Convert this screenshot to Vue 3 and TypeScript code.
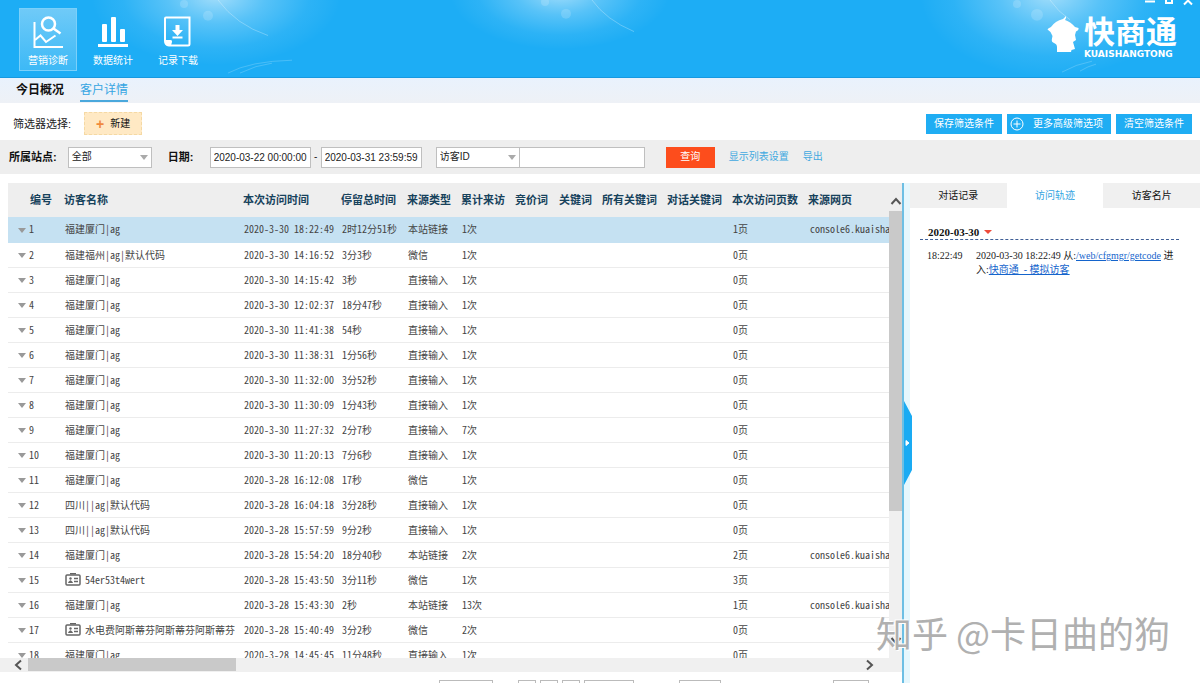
<script setup lang="ts">
import { ref } from 'vue'

interface Visit {
  name: string
  card?: boolean
  time: string
  stay: string
  source: string
  visits: string
  pages: string
  page?: string
}

const columns: { label: string; cls: string }[] = [
  { label: '编号', cls: 'c-no' },
  { label: '访客名称', cls: 'c-name' },
  { label: '本次访问时间', cls: 'c-time' },
  { label: '停留总时间', cls: 'c-stay' },
  { label: '来源类型', cls: 'c-source' },
  { label: '累计来访', cls: 'c-visits' },
  { label: '竞价词', cls: 'c-bid' },
  { label: '关键词', cls: 'c-key' },
  { label: '所有关键词', cls: 'c-all' },
  { label: '对话关键词', cls: 'c-all' },
  { label: '本次访问页数', cls: 'c-pages' },
  { label: '来源网页', cls: 'c-page' },
]

const visits: Visit[] = [
  { name: '福建厦门|ag', time: '2020-3-30 18:22:49', stay: '2时12分51秒', source: '本站链接', visits: '1次', pages: '1页', page: 'console6.kuaisha' },
  { name: '福建福州|ag|默认代码', time: '2020-3-30 14:16:52', stay: '3分3秒', source: '微信', visits: '1次', pages: '0页' },
  { name: '福建厦门|ag', time: '2020-3-30 14:15:42', stay: '3秒', source: '直接输入', visits: '1次', pages: '0页' },
  { name: '福建厦门|ag', time: '2020-3-30 12:02:37', stay: '18分47秒', source: '直接输入', visits: '1次', pages: '0页' },
  { name: '福建厦门|ag', time: '2020-3-30 11:41:38', stay: '54秒', source: '直接输入', visits: '1次', pages: '0页' },
  { name: '福建厦门|ag', time: '2020-3-30 11:38:31', stay: '1分56秒', source: '直接输入', visits: '1次', pages: '0页' },
  { name: '福建厦门|ag', time: '2020-3-30 11:32:00', stay: '3分52秒', source: '直接输入', visits: '1次', pages: '0页' },
  { name: '福建厦门|ag', time: '2020-3-30 11:30:09', stay: '1分43秒', source: '直接输入', visits: '1次', pages: '0页' },
  { name: '福建厦门|ag', time: '2020-3-30 11:27:32', stay: '2分7秒', source: '直接输入', visits: '7次', pages: '0页' },
  { name: '福建厦门|ag', time: '2020-3-30 11:20:13', stay: '7分6秒', source: '直接输入', visits: '1次', pages: '0页' },
  { name: '福建厦门|ag', time: '2020-3-28 16:12:08', stay: '17秒', source: '微信', visits: '1次', pages: '0页' },
  { name: '四川||ag|默认代码', time: '2020-3-28 16:04:18', stay: '3分28秒', source: '直接输入', visits: '1次', pages: '0页' },
  { name: '四川||ag|默认代码', time: '2020-3-28 15:57:59', stay: '9分2秒', source: '直接输入', visits: '1次', pages: '0页' },
  { name: '福建厦门|ag', time: '2020-3-28 15:54:20', stay: '18分40秒', source: '本站链接', visits: '2次', pages: '2页', page: 'console6.kuaisha' },
  { name: '54er53t4wert', card: true, time: '2020-3-28 15:43:50', stay: '3分11秒', source: '微信', visits: '1次', pages: '3页' },
  { name: '福建厦门|ag', time: '2020-3-28 15:43:30', stay: '2秒', source: '本站链接', visits: '13次', pages: '1页', page: 'console6.kuaisha' },
  { name: '水电费阿斯蒂芬阿斯蒂芬阿斯蒂芬', card: true, time: '2020-3-28 15:40:49', stay: '3分2秒', source: '微信', visits: '2次', pages: '0页' },
  { name: '福建厦门|ag', time: '2020-3-28 14:45:45', stay: '11分48秒', source: '直接输入', visits: '1次', pages: '0页' },
]

const selected = ref(0)
const detailTabs = ['对话记录', '访问轨迹', '访客名片']
const detailTab = ref(1)
const start = ref('2020-03-22 00:00:00')
const end = ref('2020-03-31 23:59:59')
const keyword = ref('')
</script>

<template>
  <div class="app">
    <header class="top">
      <svg class="flares" viewBox="0 0 1200 78" preserveAspectRatio="none" aria-hidden="true">
        <defs>
          <radialGradient id="glow">
            <stop offset="0" stop-color="#fff" stop-opacity=".6" />
            <stop offset=".4" stop-color="#dff4ff" stop-opacity=".3" />
            <stop offset=".75" stop-color="#dff4ff" stop-opacity=".08" />
            <stop offset="1" stop-color="#fff" stop-opacity="0" />
          </radialGradient>
        </defs>
        <ellipse cx="216" cy="-4" rx="125" ry="70" fill="url(#glow)" />
        <ellipse cx="560" cy="-8" rx="110" ry="58" fill="url(#glow)" />
        <ellipse cx="1050" cy="-6" rx="130" ry="84" fill="url(#glow)" />
        <g fill="#fff" fill-opacity=".16">
          <circle cx="184" cy="4" r="4" /><circle cx="208" cy="16" r="5" />
          <circle cx="545" cy="2" r="4" /><circle cx="566" cy="14" r="5" />
          <circle cx="1017" cy="4" r="4" /><circle cx="1037" cy="15" r="6" />
        </g>
        <g fill="none" stroke="#fff" stroke-opacity=".28">
          <path d="M218 0Q236 25 268 36M592 0Q606 20 634 32M1050 0Q1058 12 1070 20" />
          <path d="M228 74Q250 62 292 61M240 74Q256 66 272 64M1062 73Q1076 65 1092 62M1080 72Q1088 67 1096 65" stroke-opacity=".2" />
        </g>
      </svg>
      <nav class="modules">
        <button class="module current" type="button">
          <svg width="32" height="32" viewBox="0 0 32 32" fill="none" stroke="#fff" stroke-width="2">
            <path d="M2.500 6V31H31" />
            <path d="M3 24L8.500 19.500L14 26L23.500 19.500" />
            <circle cx="16.500" cy="8" r="6.500" stroke-width="2.500" />
            <path d="M21.500 12.500L28.500 17.500" stroke-width="2.500" />
          </svg>
          <span>营销诊断</span>
        </button>
        <button class="module" type="button">
          <svg width="32" height="32" viewBox="0 0 32 32" fill="#fff">
            <rect x="5" y="8" width="5" height="18" rx="1" />
            <rect x="14" y="1" width="5" height="25" rx="1" />
            <rect x="23" y="13" width="5" height="13" rx="1" />
            <rect x="1" y="28" width="30" height="3" />
          </svg>
          <span>数据统计</span>
        </button>
        <button class="module" type="button">
          <svg width="32" height="32" viewBox="0 0 32 32" fill="none" stroke="#fff" stroke-width="2">
            <path d="M3 25V2.500Q3 1.500 4 1.500H27.500V28Q27.500 29.500 26 29.500H7Q3 29 3 25Z" />
            <path d="M3 24H8.500Q10.500 24 10 26L9 29.500H7Q3 29 3 25Z" fill="#fff" stroke="none" />
            <path d="M13.500 9H17.500V14H21L15.500 20L10 14H13.500Z" fill="#fff" stroke="none" />
            <path d="M10.500 21.500H20.500" />
          </svg>
          <span>记录下载</span>
        </button>
      </nav>
      <div class="brand">
        <svg width="32" height="38" viewBox="0 0 32 38" fill="#fff" aria-hidden="true">
          <path d="M19 0Q19.500 2 18 4Q24 6 28 11L31.500 12Q32 14 29 15.500L28 19L29 24L26 26L28 33L24.500 34L24 36H10V31Q10 28 7 27Q4 26 5 22.500L5.500 20L3.500 16L.5 13.500Q1 12 4 11Q8 5 16 3Z" />
        </svg>
        <div class="brand-text">
          <strong>快商通</strong>
          <span>KUAISHANGTONG</span>
        </div>
      </div>
      <div class="window-controls">
        <button type="button" aria-label="最小化"><svg width="10" height="6" viewBox="0 0 10 6"><path d="M0 1.500H10" /></svg></button>
        <button type="button" aria-label="还原"><svg width="10" height="6" viewBox="0 0 10 6"><path d="M2 0V3H8V0" /></svg></button>
        <button type="button" aria-label="关闭"><svg width="10" height="6" viewBox="0 0 10 6"><path d="M1 4.500L5 .5L9 4.500" /></svg></button>
      </div>
    </header>

    <nav class="subnav">
      <a href="#overview">今日概况</a>
      <a href="#customers" class="on">客户详情</a>
    </nav>

    <section class="presets">
      <span>筛选器选择:</span>
      <button class="new" type="button"><i>+</i>新建</button>
      <div class="actions">
        <button type="button">保存筛选条件</button>
        <button type="button" class="more">
          <svg width="14" height="14" viewBox="0 0 14 14" fill="none" stroke="#fff"><circle cx="7" cy="7" r="6" /><path d="M3.500 7H10.500M7 3.500V10.500" /></svg>
          更多高级筛选项
        </button>
        <button type="button">清空筛选条件</button>
      </div>
    </section>

    <form class="filters" @submit.prevent>
      <label class="bold" for="site">所属站点:</label>
      <span class="select site"><select id="site"><option>全部</option></select></span>
      <label class="bold date-label" for="from">日期:</label>
      <input id="from" v-model="start" class="date" type="text">
      <span class="dash">-</span>
      <input v-model="end" class="date" type="text" aria-label="结束日期">
      <span class="select field"><select aria-label="查询字段"><option>访客ID</option></select></span>
      <input v-model="keyword" class="keyword" type="text" aria-label="查询内容">
      <button class="query" type="submit">查询</button>
      <a href="#columns">显示列表设置</a>
      <a href="#export">导出</a>
    </form>

    <main class="body">
      <section class="list">
        <div class="grid-area">
          <div class="table-clip">
            <table>
              <thead>
                <tr><th v-for="c in columns" :key="c.label" :class="c.cls">{{ c.label }}</th></tr>
              </thead>
              <tbody>
                <tr v-for="(v, i) in visits" :key="i" :class="{ picked: i === selected }" @click="selected = i">
                  <td class="no"><span class="caret"></span>{{ i + 1 }}</td>
                  <td>
                    <span class="name">
                      <svg v-if="v.card" width="16" height="13" viewBox="0 0 16 13" fill="none" stroke="#666">
                        <rect x="1" y="2" width="14" height="10" rx="1" stroke-width="1.500" />
                        <path d="M5 .7H11" stroke-width="1.400" />
                        <circle cx="5.500" cy="5.500" r="1.200" fill="#666" stroke="none" />
                        <path d="M3.500 9.500Q5.500 6 7.500 9.500Z" fill="#666" />
                        <path d="M9 5.500H13M9 8.500H13" stroke-width="1.300" />
                      </svg>
                      {{ v.name }}
                    </span>
                  </td>
                  <td>{{ v.time }}</td>
                  <td>{{ v.stay }}</td>
                  <td>{{ v.source }}</td>
                  <td>{{ v.visits }}</td>
                  <td></td>
                  <td></td>
                  <td></td>
                  <td></td>
                  <td>{{ v.pages }}</td>
                  <td class="url">{{ v.page }}</td>
                </tr>
              </tbody>
            </table>
          </div>
          <div class="vbar">
            <button type="button" class="up" aria-label="向上滚动"><svg width="12" height="8" viewBox="0 0 12 8"><path d="M1.500 7L6 2L10.500 7" /></svg></button>
            <div class="vtrack"><div class="vthumb"></div></div>
            <button type="button" class="down" aria-label="向下滚动"><svg width="12" height="8" viewBox="0 0 12 8"><path d="M1.500 1L6 6L10.500 1" /></svg></button>
          </div>
        </div>
        <div class="hbar">
          <button type="button" aria-label="向左滚动"><svg width="8" height="12" viewBox="0 0 8 12"><path d="M7 1.500L2 6L7 10.500" /></svg></button>
          <div class="htrack"><div class="hthumb"></div></div>
          <button type="button" aria-label="向右滚动"><svg width="8" height="12" viewBox="0 0 8 12"><path d="M1 1.500L6 6L1 10.500" /></svg></button>
        </div>
        <div class="pager">
          <select aria-label="每页条数" class="size"></select>
          <button type="button" aria-label="首页"></button>
          <button type="button" aria-label="上一页"></button>
          <button type="button" aria-label="下一页"></button>
          <button type="button" aria-label="末页" class="wide"></button>
          <input type="text" aria-label="页码" class="jump">
          <button type="button" aria-label="跳转" class="go"></button>
        </div>
      </section>

      <div class="splitter">
        <button type="button" aria-label="收起详情">
          <svg width="8" height="84" viewBox="0 0 8 84"><path d="M0 0L8 15V69L0 84Z" fill="#1aabf3" /><path d="M2 39.500L5 42L2 44.500Z" fill="#fff" stroke="#fff" /></svg>
        </button>
      </div>

      <aside class="detail">
        <div class="tabs">
          <button v-for="(t, i) in detailTabs" :key="t" type="button" :class="{ on: i === detailTab }" @click="detailTab = i">{{ t }}</button>
        </div>
        <div class="track">
          <h3>2020-03-30<span class="red-caret"></span></h3>
          <div class="entry">
            <time>18:22:49</time>
            <p>2020-03-30 18:22:49 从:<a href="#getcode">/web/cfgmgr/getcode</a> 进<br>入:<a href="#visitor">快商通&nbsp; - 模拟访客</a></p>
          </div>
        </div>
      </aside>
    </main>
    <div class="watermark">知乎 @卡日曲的狗</div>
  </div>
</template>

<style>
html, body, #app { height: 100%; }
</style>

<style scoped>
.app {
  position: relative;
  height: 100%;
  display: flex;
  flex-direction: column;
  overflow: hidden;
  background: #fff;
  color: #222;
  font: 10px/14px "Liberation Sans", "Noto Sans CJK SC", sans-serif;
}
* { box-sizing: border-box; }
button, input, select { font: inherit; color: inherit; margin: 0; padding: 0; border-radius: 0; }
button { border: 0; background: none; cursor: pointer; }
a { text-decoration: none; }

.top {
  position: relative;
  flex: none;
  height: 78px;
  padding: 8px 23px 0 19px;
  display: flex;
  justify-content: space-between;
  align-items: flex-start;
  background: #1dadf5;
  border-bottom: 1px solid #1799e0;
  overflow: hidden;
}
.flares { position: absolute; inset: 0; width: 100%; height: 100%; }
.modules { position: relative; display: flex; gap: 7px; }
.module {
  width: 58px;
  height: 63px;
  display: flex;
  flex-direction: column;
  align-items: center;
  gap: 6px;
  padding-top: 7px;
  border: 1px solid transparent;
  color: #fff;
}
.module.current { background: linear-gradient(#6fcaf8, #3db9f6); border-color: #7bd0fa; }
.brand { position: relative; display: flex; gap: 5px; padding-top: 8px; color: #fff; }
.brand-text { display: flex; flex-direction: column; }
.brand-text strong { font-size: 31px; line-height: 33px; font-weight: 700; }
.brand-text span { font: bold 9px/10px "DejaVu Sans", sans-serif; }
.window-controls { position: absolute; top: 0; right: 7px; display: flex; gap: 9px; }
.window-controls button { display: flex; }
.window-controls svg { fill: none; stroke: #fff; stroke-width: 2; }

.subnav {
  flex: none;
  height: 25px;
  padding: 0 16px;
  display: flex;
  gap: 16px;
  background: linear-gradient(#e9f2fd, #eef1f6);
  font-size: 12px;
  font-weight: 700;
}
.subnav a { height: 24px; line-height: 25px; color: #111; }
.subnav a.on { color: #35a5e2; font-weight: 400; border-bottom: 2px solid #4aa8dc; }

.presets { flex: none; height: 37px; padding: 4px 8px 0 13px; display: flex; align-items: center; font-size: 11px; }
.new {
  width: 58px;
  height: 23px;
  margin-left: 13px;
  display: flex;
  align-items: center;
  justify-content: center;
  gap: 6px;
  background: #ffe9c4;
  border: 1px dashed #f5d9a4;
  color: #111;
  font-size: 10px;
}
.new i { color: #f08a3c; font: bold 14px/16px "Liberation Sans", sans-serif; }
.actions { margin-left: auto; display: flex; gap: 5px; font-size: 10px; }
.actions button { height: 20px; padding: 0 8px; background: #1fadf3; color: #fff; }
.actions .more { display: flex; align-items: center; gap: 9px; padding: 0 8px 0 3px; }

.filters {
  flex: none;
  height: 34px;
  padding-left: 9px;
  display: flex;
  align-items: center;
  background: #eee;
}
.bold { font-size: 11px; font-weight: 700; color: #111; }
.filters input { height: 21px; border: 1px solid #bfbfbf; background: #fff; }
.select { position: relative; width: 84px; height: 21px; }
.select select { width: 100%; height: 100%; padding-left: 3px; appearance: none; border: 1px solid #bfbfbf; background: #fff; }
.select::after {
  content: "";
  position: absolute;
  right: 4px;
  top: 8px;
  border: 4px solid transparent;
  border-top: 5px solid #aaa;
  border-bottom: 0;
}
.site { margin-left: 11px; }
.date-label { width: 42px; margin-left: 16px; }
.date { width: 101px; padding-left: 3px; }
.dash { width: 10px; text-align: center; }
.field { margin-left: 14px; }
.keyword { width: 126px; margin-left: -1px; padding: 0 3px; }
.query { width: 49px; height: 21px; margin: 0 14px 0 21px; background: #fd4d1c; color: #fff; }
.filters a { margin-right: 14px; color: #41a9e0; }

.body { flex: 1; min-height: 0; display: flex; padding-top: 9px; }
.list { flex: 1; min-width: 0; display: flex; flex-direction: column; }
.grid-area { flex: 1; min-height: 0; display: flex; padding-left: 8px; }
.table-clip { flex: 1; min-width: 0; overflow: hidden; }
table { width: 100%; table-layout: fixed; border-collapse: collapse; }
th {
  height: 34px;
  padding: 0;
  background: #eee;
  color: #17425c;
  font-size: 11px;
  font-weight: 700;
  text-align: left;
  white-space: nowrap;
}
.c-no { width: 56px; padding-left: 22px; }
.c-name { width: 179px; }
.c-time { width: 98px; }
.c-stay { width: 66px; }
.c-source { width: 54px; }
.c-visits { width: 54px; }
.c-bid { width: 44px; }
.c-key { width: 43px; }
.c-all { width: 65px; }
.c-pages { width: 76px; }
td {
  height: 25px;
  padding: 0 0 0 1px;
  border-bottom: 1px solid #ececec;
  color: #444;
  font-family: "Noto Sans CJK SC", sans-serif;
  font-feature-settings: "hwid";
  white-space: nowrap;
  overflow: hidden;
}
.picked td { background: #c5e1f2; border-color: #c5e1f2; }
td.no { padding-left: 10px; }
td.url { padding-left: 2px; }
.caret {
  display: inline-block;
  margin-right: 3px;
  vertical-align: middle;
  border: 4px solid transparent;
  border-top: 5px solid #999;
  border-bottom: 0;
}
.name { display: flex; align-items: center; gap: 4px; }

.vbar { flex: none; width: 13px; display: flex; flex-direction: column; background: #f0f0f0; }
.vbar button, .hbar button { display: flex; align-items: center; justify-content: center; }
.vbar svg, .hbar svg { fill: none; stroke: #555; stroke-width: 2; }
.up { height: 28px; padding-top: 8px; background: #eee; }
.vtrack { flex: 1; }
.vthumb { height: 71%; background: #c9c9c9; }
.down { height: 24px; padding-bottom: 10px; }
.hbar { flex: none; height: 14px; padding: 0 22px 0 8px; display: flex; background: #f0f0f0; }
.hbar button { width: 20px; }
.htrack { flex: 1; padding-bottom: 1px; }
.hthumb { width: 25%; height: 100%; background: #c9c9c9; }
.pager { flex: none; height: 11px; padding: 8px 33px 0 439px; display: flex; gap: 4px; align-items: flex-start; overflow: hidden; }
.pager button, .pager select, .pager input { flex: none; width: 18px; height: 18px; border: 1px solid #bbb; background: #fff; appearance: none; }
.pager .size { width: 54px; margin-right: 21px; }
.pager .wide { width: 50px; }
.pager .jump { width: 42px; margin-left: 41px; }
.pager .go { width: 36px; margin-left: auto; }

.splitter {
  position: relative;
  flex: none;
  width: 8px;
  border-left: 2px solid #6dbfe4;
  background: #e6f7fd;
}
.splitter button { position: absolute; left: 0; top: 52%; transform: translateY(-50%); display: flex; }

.detail { flex: 0 0 290px; }
.tabs { display: flex; }
.tabs button { flex: 1; height: 25px; background: #f0f0f0; color: #111; }
.tabs button.on { background: #fff; color: #35a5e2; }
.track { padding: 17px 21px 0 10px; font-family: "Liberation Serif", "Noto Sans CJK SC", serif; }
.track h3 {
  margin: 0;
  padding-left: 8px;
  display: flex;
  align-items: center;
  gap: 5px;
  border-bottom: 1px dashed #3f5f96;
  font-size: 11px;
  line-height: 14px;
  color: #111;
}
.red-caret {
  border: 4px solid transparent;
  border-top: 4px solid #ee4b3a;
  border-bottom: 0;
}
.entry { display: flex; gap: 14px; padding: 9px 0 0 7px; }
.entry time { flex: none; width: 35px; }
.entry p { margin: 0; white-space: nowrap; }
.entry a { color: #1464cc; text-decoration: underline; }

.watermark {
  position: absolute;
  right: 30px;
  bottom: 27px;
  font: 36px/48px "Noto Sans CJK SC", sans-serif;
  color: #b0b0b0;
  text-shadow: -1px -1px 0 #fff, 1px 1px 0 #fff;
  pointer-events: none;
  white-space: nowrap;
}
</style>
